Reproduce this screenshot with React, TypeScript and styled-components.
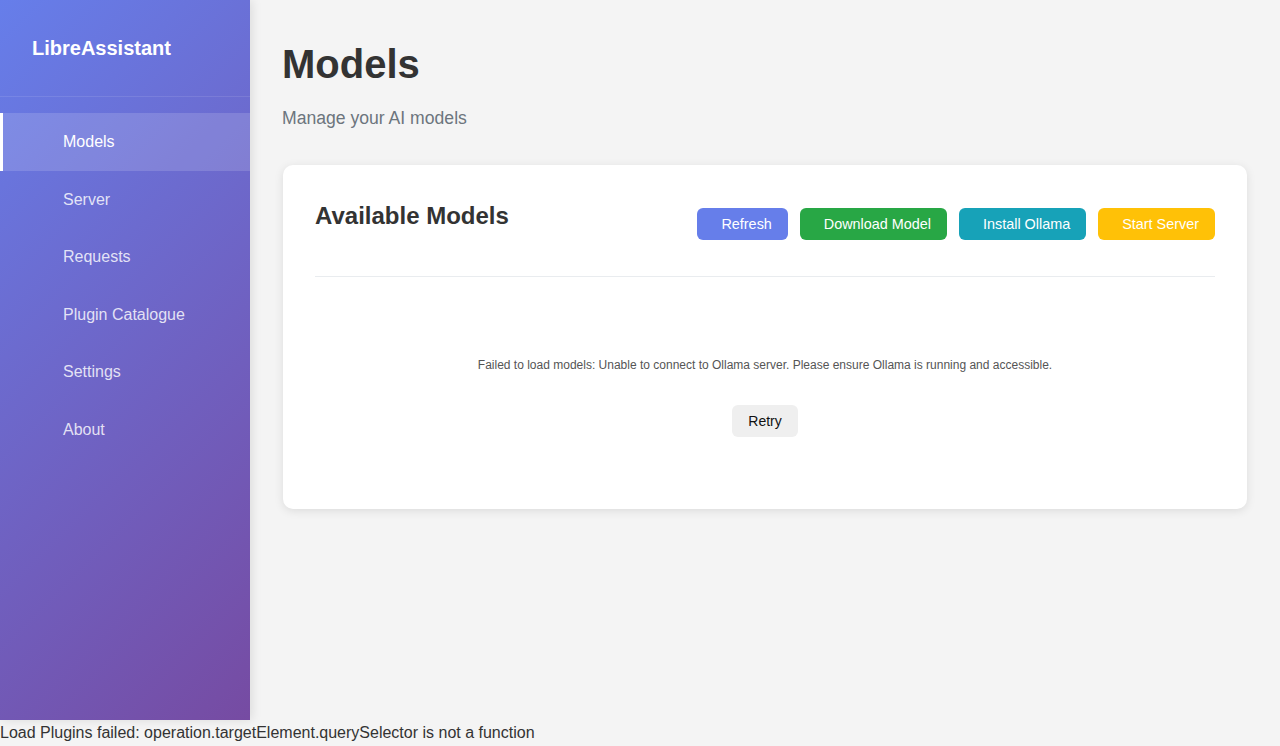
import React from "react";
import styled, { createGlobalStyle } from "styled-components";

const GlobalStyle = createGlobalStyle`
  html, body {
    margin: 0;
    padding: 0;
    background: #f4f4f4;
    font-family: "Liberation Sans", Arial, sans-serif;
    color: #333;
    line-height: 1.6;
  }
  * { box-sizing: border-box; }
`;

const Layout = styled.div`
  display: flex;
  height: 720px;
`;

const Sidebar = styled.aside`
  width: 250px;
  flex-shrink: 0;
  background: linear-gradient(135deg, #667eea 0%, #764ba2 100%);
  color: #fff;
  box-shadow: 2px 0 10px rgba(0, 0, 0, 0.1);
  position: relative;
  z-index: 1;
`;

const SidebarHeader = styled.div`
  padding: 32px;
  border-bottom: 1px solid rgba(255, 255, 255, 0.1);
`;

const Brand = styled.h2`
  margin: 0;
  font-size: 20px;
  font-weight: 700;
  line-height: 1.6;
`;

const Nav = styled.nav`
  display: flex;
  flex-direction: column;
  padding: 16px 0;
`;

const NavItem = styled.a<{ $active?: boolean }>`
  display: block;
  padding: 16px 24px 16px 60px;
  font-size: 16px;
  line-height: 1.6;
  color: ${(p) => (p.$active ? "#fff" : "rgba(255,255,255,0.82)")};
  background: ${(p) => (p.$active ? "rgba(255,255,255,0.15)" : "transparent")};
  border-left: 3px solid ${(p) => (p.$active ? "#fff" : "transparent")};
  text-decoration: none;
  cursor: pointer;
`;

const Main = styled.main`
  flex: 1;
  padding: 32px;
  min-width: 0;
`;

const PageTitle = styled.h1`
  margin: 0 0 8px;
  font-size: 40px;
  font-weight: 700;
  color: #333;
  line-height: 1.6;
`;

const PageSubtitle = styled.p`
  margin: 0 0 33px;
  font-size: 17.6px;
  color: #6c757d;
  line-height: 1.6;
`;

const Card = styled.section`
  margin: 0 1px;
  background: #fff;
  border-radius: 10px;
  box-shadow: 0 2px 10px rgba(0, 0, 0, 0.1);
  padding: 32px;
`;

const CardHeader = styled.div`
  display: flex;
  justify-content: space-between;
  align-items: center;
  padding-bottom: 24px;
  border-bottom: 1px solid #e9ecef;
  margin-bottom: 24px;
`;

const CardTitle = styled.h2`
  margin: 0 0 16px;
  font-size: 24px;
  font-weight: 700;
  color: #333;
  line-height: 1.6;
`;

const Actions = styled.div`
  display: flex;
  gap: 12px;
`;

const ActionButton = styled.button<{ $bg: string }>`
  font-family: inherit;
  font-size: 14.4px;
  line-height: normal;
  height: 32px;
  padding: 0 16px 0 24px;
  border: none;
  border-radius: 6px;
  background: ${(p) => p.$bg};
  color: #fff;
  cursor: pointer;
`;

const ErrorBox = styled.div`
  display: flex;
  flex-direction: column;
  align-items: center;
  padding: 40px 20px;
`;

const ErrorText = styled.p`
  margin: 15px 0 30px;
  font-size: 12px;
  color: #555;
  line-height: 1.6;
  text-align: center;
`;

const RetryButton = styled.button`
  font-family: inherit;
  font-size: 14px;
  line-height: normal;
  height: 32px;
  padding: 0 16px;
  border: none;
  border-radius: 6px;
  background: #efefef;
  color: #111;
  cursor: pointer;
`;

const StatusLine = styled.div`
  font-size: 16px;
  line-height: 1.6;
  color: #333;
`;

const navItems = ["Models", "Server", "Requests", "Plugin Catalogue", "Settings", "About"];

const actions = [
  { label: "Refresh", bg: "#667eea" },
  { label: "Download Model", bg: "#28a745" },
  { label: "Install Ollama", bg: "#17a2b8" },
  { label: "Start Server", bg: "#ffc107" },
];

export default function App() {
  return (
    <>
      <GlobalStyle />
      <Layout>
        <Sidebar>
          <SidebarHeader>
            <Brand>LibreAssistant</Brand>
          </SidebarHeader>
          <Nav>
            {navItems.map((item, i) => (
              <NavItem key={item} $active={i === 0}>
                {item}
              </NavItem>
            ))}
          </Nav>
        </Sidebar>
        <Main>
          <PageTitle>Models</PageTitle>
          <PageSubtitle>Manage your AI models</PageSubtitle>
          <Card>
            <CardHeader>
              <CardTitle>Available Models</CardTitle>
              <Actions>
                {actions.map((a) => (
                  <ActionButton key={a.label} $bg={a.bg}>
                    {a.label}
                  </ActionButton>
                ))}
              </Actions>
            </CardHeader>
            <ErrorBox>
              <ErrorText>
                Failed to load models: Unable to connect to Ollama server. Please ensure Ollama is running and accessible.
              </ErrorText>
              <RetryButton>Retry</RetryButton>
            </ErrorBox>
          </Card>
        </Main>
      </Layout>
      <StatusLine>Load Plugins failed: operation.targetElement.querySelector is not a function</StatusLine>
    </>
  );
}
